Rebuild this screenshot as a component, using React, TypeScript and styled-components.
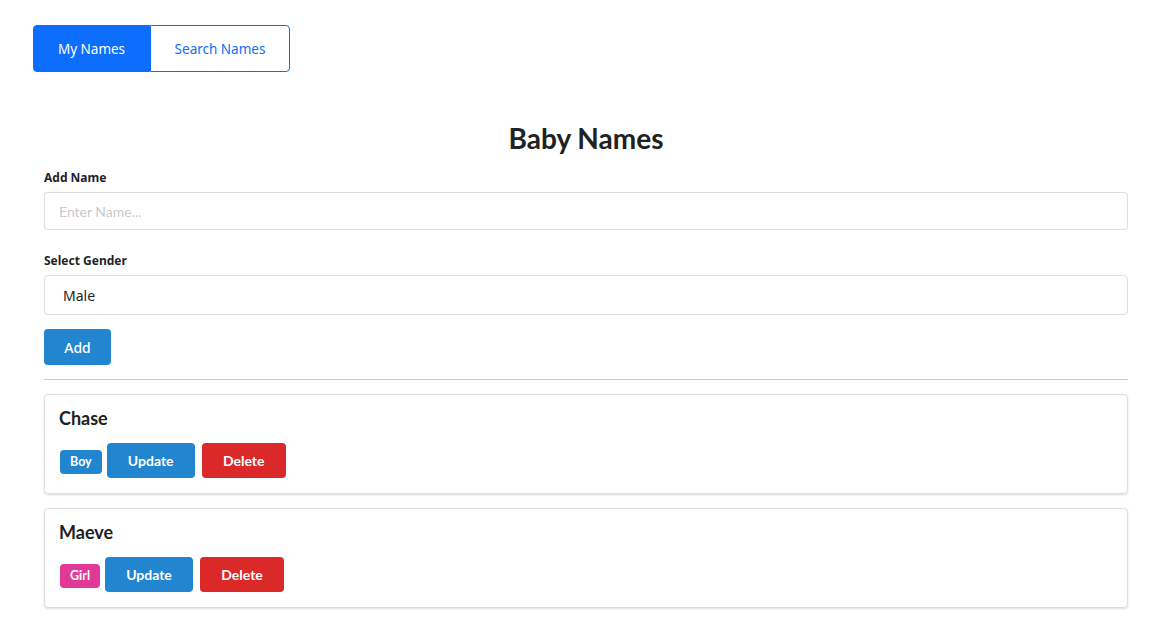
import React from "react";
import styled, { createGlobalStyle } from "styled-components";

const Global = createGlobalStyle`
  html, body { margin: 0; padding: 0; background: #fff; }
  body { font-family: "Lato", "Helvetica Neue", Arial, sans-serif; color: rgba(0,0,0,0.87); }
  * { box-sizing: border-box; }
`;

const Page = styled.div`
  width: 1168px;
  min-height: 626px;
  padding: 25px 40px 0 33px;
`;

const Tabs = styled.div`
  display: flex;
`;

const Tab = styled.button<{ $active?: boolean }>`
  height: 47px;
  padding: 0;
  white-space: nowrap;
  font-family: "Noto Sans", "Open Sans", sans-serif;
  font-size: 13.5px;
  border: 1px solid #0d6efd;
  background: ${(p) => (p.$active ? "#0d6efd" : "#fff")};
  color: ${(p) => (p.$active ? "#fff" : "#0d6efd")};
  border-radius: ${(p) => (p.$active ? "4px 0 0 4px" : "0 4px 4px 0")};
  width: ${(p) => (p.$active ? "117px" : "140px")};
  margin: 0;
`;

const Main = styled.div`
  padding-left: 11px;
`;

const Title = styled.h1`
  margin: 48px 0 0;
  text-align: center;
  font-family: "Lato", sans-serif;
  font-weight: 700;
  font-size: 28px;
  line-height: 36px;
  color: #212121;
`;

const Field = styled.div`
  display: flex;
  flex-direction: column;
`;

const Label = styled.label<{ $top: number }>`
  margin-top: ${(p) => p.$top}px;
  height: 16px;
  font-family: "Noto Sans", "Open Sans", sans-serif;
  font-weight: 700;
  font-size: 12px;
  line-height: 16px;
  color: #212529;
  margin-bottom: 6px;
`;

const Input = styled.input`
  height: 38px;
  width: 100%;
  border: 1px solid rgba(34,36,38,0.15);
  border-radius: 4px;
  padding: 0 14px;
  font-family: "Lato", sans-serif;
  font-size: 14px;
  outline: none;
  &::placeholder { color: rgba(191,191,191,0.87); }
`;

const Select = styled.div`
  height: 40px;
  width: 100%;
  border: 1px solid rgba(34,36,38,0.15);
  border-radius: 4px;
  padding: 0 18px;
  display: flex;
  align-items: center;
  font-family: "Noto Sans", "Open Sans", sans-serif;
  font-size: 14px;
  color: #212529;
`;

const AddButton = styled.button`
  margin-top: 14px;
  width: 67px;
  height: 36px;
  border: none;
  border-radius: 4px;
  background: #2185d0;
  color: #fff;
  font-family: "Noto Sans", "Open Sans", sans-serif;
  font-weight: 500;
  font-size: 14px;
  align-self: flex-start;
`;

const Divider = styled.hr`
  margin: 14px 0 0;
  border: none;
  border-top: 1px solid #ccc;
  height: 0;
`;

const Card = styled.div<{ $top: number }>`
  margin-top: ${(p) => p.$top}px;
  border: 1px solid rgba(34,36,38,0.15);
  border-radius: 4px;
  box-shadow: 0 1px 2px 0 rgba(34,36,38,0.15);
  padding: 12px 14px 15px;
`;

const NameHeading = styled.h3`
  margin: 0;
  font-family: "Lato", sans-serif;
  font-weight: 700;
  font-size: 18px;
  line-height: 23px;
  color: #212121;
`;

const Actions = styled.div`
  display: flex;
  align-items: center;
  margin-top: 13px;
  padding-left: 1px;
`;

const Tag = styled.span<{ $color: string }>`
  display: inline-flex;
  align-items: center;
  justify-content: center;
  height: 24px;
  margin-top: 2px;
  padding: 0 10px;
  border-radius: 4px;
  background: ${(p) => p.$color};
  color: #fff;
  font-family: "Lato", sans-serif;
  font-weight: 700;
  font-size: 12.5px;
  margin-right: 5px;
`;

const ActionButton = styled.button<{ $color: string }>`
  height: 35px;
  border: none;
  border-radius: 4px;
  background: ${(p) => p.$color};
  color: #fff;
  font-family: "Lato", sans-serif;
  font-weight: 700;
  font-size: 14px;
  padding: 0;
  width: 88px;
  margin-right: 7px;
  & + & { width: 84px; }
`;

const names = [
  { name: "Chase", gender: "Boy", color: "#2185d0", top: 14 },
  { name: "Maeve", gender: "Girl", color: "#e03997", top: 14 },
];

export default function App() {
  return (
    <>
      <Global />
      <Page>
        <Tabs>
          <Tab $active>My Names</Tab>
          <Tab>Search Names</Tab>
        </Tabs>
        <Main>
          <Title>Baby Names</Title>
          <Field>
            <Label $top={14}>Add Name</Label>
            <Input placeholder="Enter Name..." />
            <Label $top={23}>Select Gender</Label>
            <Select>Male</Select>
            <AddButton>Add</AddButton>
          </Field>
          <Divider />
          {names.map((n) => (
            <Card key={n.name} $top={n.top}>
              <NameHeading>{n.name}</NameHeading>
              <Actions>
                <Tag $color={n.color}>{n.gender}</Tag>
                <ActionButton $color="#2185d0">Update</ActionButton>
                <ActionButton $color="#db2828">Delete</ActionButton>
              </Actions>
            </Card>
          ))}
        </Main>
      </Page>
    </>
  );
}
